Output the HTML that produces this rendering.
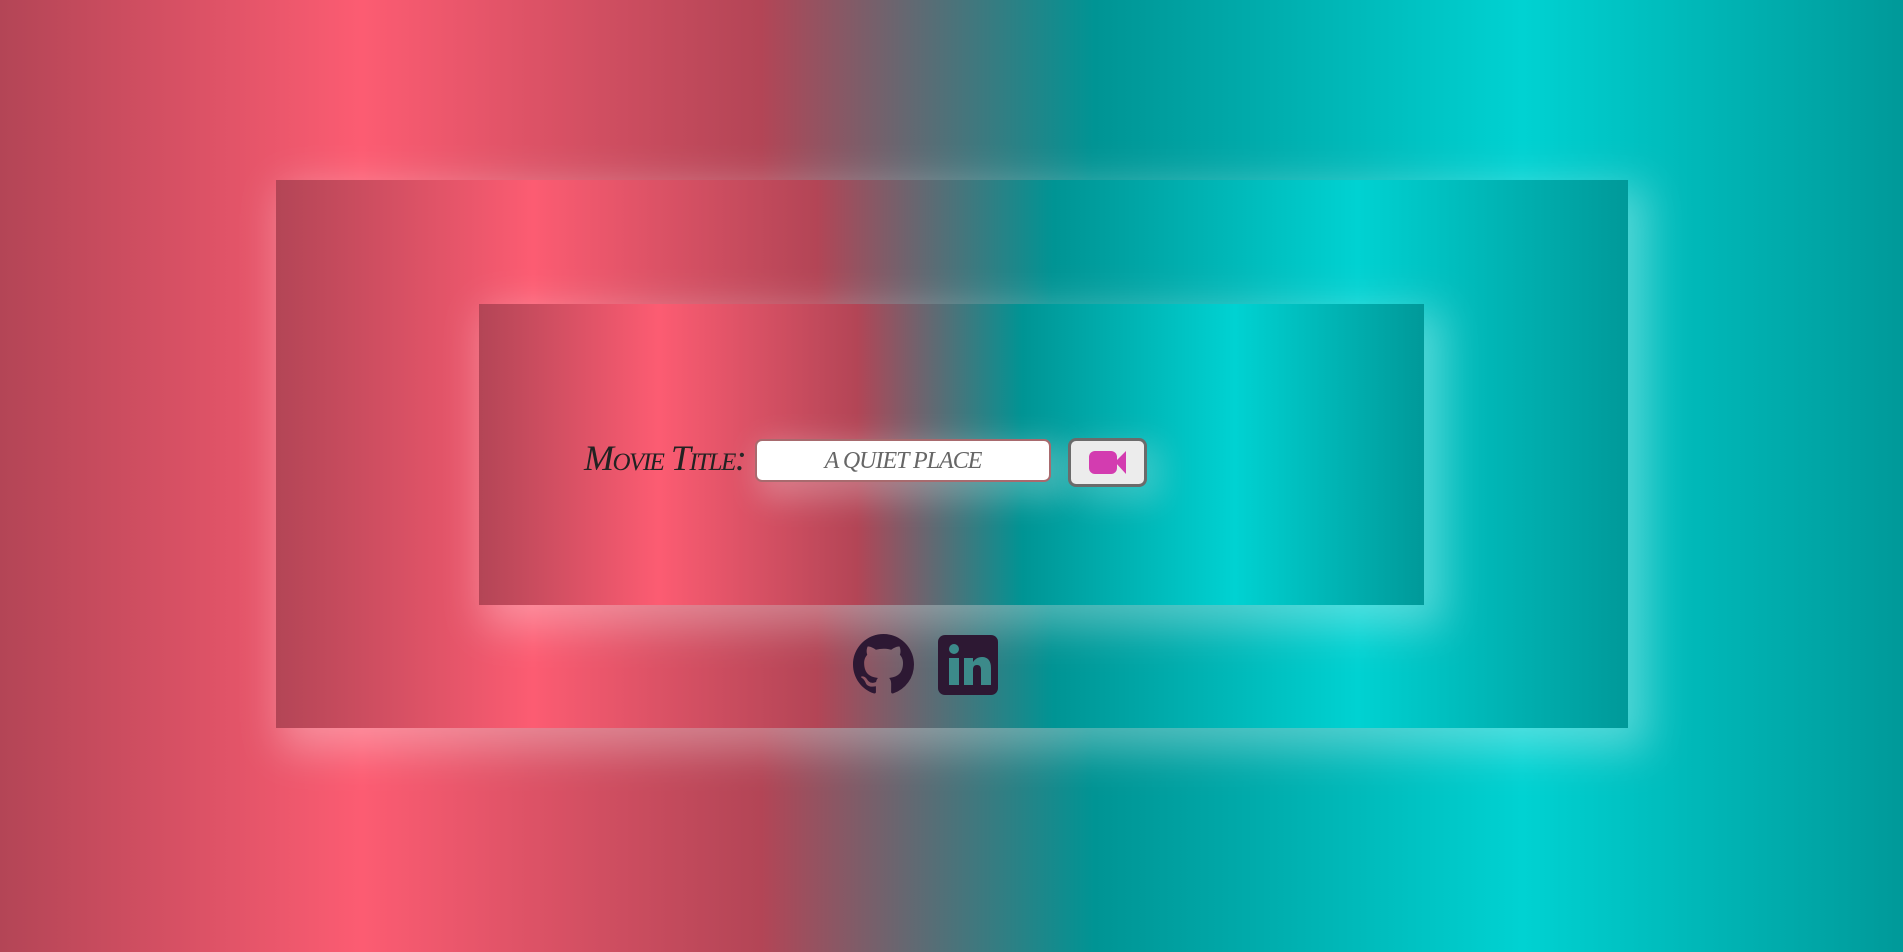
<!DOCTYPE html>
<html><head><meta charset="utf-8"><style>
html,body{margin:0;padding:0;width:1903px;height:952px;overflow:hidden}
.g{background:linear-gradient(90deg,#b34556 0%,#fc5c72 19%,#b34556 40%,#009494 57.5%,#00d2d2 80%,#009999 100%)}
body{position:relative}
.box{position:absolute;box-shadow:12px 14px 40px 8px rgba(255,255,255,0.32)}
#outer{left:276px;top:180px;width:1352px;height:548px}
#inner{left:479px;top:304px;width:945px;height:301px}
#label{position:absolute;left:584px;top:437px;font-family:"Liberation Serif",serif;font-style:italic;font-variant:small-caps;font-size:36px;color:#222;letter-spacing:-1.5px;white-space:nowrap}
#input{position:absolute;left:755px;top:439px;width:292px;height:39px;background:#fff;border:2px solid #a86a6e;border-radius:7px;box-shadow:10px 10px 30px 8px rgba(255,255,255,.25);font-family:"Liberation Serif",serif;font-style:italic;font-size:24px;color:#666;text-align:center;line-height:40px;letter-spacing:-1px}
#btn{position:absolute;left:1068px;top:438px;width:73px;height:43px;background:#ececec;border:3px solid #6b6b6b;border-radius:8px;box-shadow:10px 10px 30px 6px rgba(255,255,255,.2)}
</style></head><body class="g">
<div id="outer" class="box g"></div>
<div id="inner" class="box g"></div>
<div id="label">Movie Title:</div>
<div id="input">A QUIET PLACE</div>
<div id="btn"><svg width="73" height="43" viewBox="0 0 73 43"><rect x="18" y="10" width="28" height="23" rx="6" fill="#d33cb0"/><path d="M44 21 L55 10 V33 Z" fill="#d33cb0"/></svg></div>
<svg style="position:absolute;left:853px;top:634px" width="61" height="61" viewBox="0 0 16 16"><path fill="#2d1833" d="M8 0C3.58 0 0 3.580 0 8c0 3.54 2.29 6.53 5.47 7.59.4.07.55-.17.55-.38 0-.19-.01-.82-.01-1.49-2.01.37-2.53-.49-2.69-.94-.09-.23-.48-.94-.82-1.13-.28-.15-.68-.52-.01-.53.63-.01 1.08.58 1.23.82.72 1.21 1.87.87 2.33.66.07-.52.28-.87.51-1.07-1.78-.2-3.64-.89-3.64-3.950 0-.87.31-1.59.82-2.15-.08-.2-.36-1.02.08-2.12 0 0 .67-.21 2.2.82.64-.18 1.32-.27 2-.27.68 0 1.36.09 2 .27 1.53-1.04 2.2-.82 2.2-.82.44 1.1.16 1.92.08 2.12.51.56.82 1.27.82 2.15 0 3.07-1.87 3.75-3.65 3.95.29.25.54.73.54 1.48 0 1.07-.01 1.93-.01 2.2 0 .21.15.46.55.38A8.013 8.013 0 0016 8c0-4.42-3.58-8-8-8z"/></svg>
<svg style="position:absolute;left:938px;top:635px" width="60" height="60" viewBox="0 0 60 60"><rect width="60" height="60" rx="7" fill="#2d1833"/><circle cx="16" cy="14" r="5" fill="#3c8a8a"/><rect x="11" y="23" width="10" height="27" fill="#3c8a8a"/><path d="M26 23h9v4c2-3 5-5 9-5 6 0 9 4 9 11v17h-10V35c0-3-1-5-4-5s-4 2-4 5v15H26z" fill="#3c8a8a"/></svg>
</body></html>
